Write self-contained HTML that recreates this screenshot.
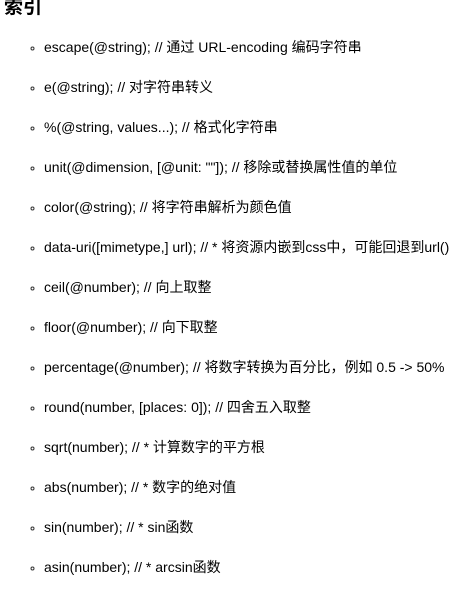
<!DOCTYPE html>
<html><head><meta charset="utf-8"><style>
body{margin:0;background:#fff;width:452px;height:565px;overflow:hidden;font-family:"Liberation Sans","Noto Sans CJK SC",sans-serif;color:#000}
h2{position:absolute;left:4px;top:-4px;margin:0;font-size:19px;font-weight:bold;line-height:24px}
ul{position:absolute;left:0;top:37px;margin:0;padding:0 0 0 44px;list-style:circle;font-size:14px;width:420px}
li{height:40px;line-height:20px;white-space:nowrap}
li::marker{font-size:11px;color:#333}
</style></head><body>
<h2>索引</h2>
<ul>
<li>escape(@string); // 通过 URL-encoding 编码字符串</li>
<li>e(@string); // 对字符串转义</li>
<li>%(@string, values...); // 格式化字符串</li>
<li>unit(@dimension, [@unit: ""]); // 移除或替换属性值的单位</li>
<li>color(@string); // 将字符串解析为颜色值</li>
<li>data-uri([mimetype,] url); // * 将资源内嵌到css中，可能回退到url()</li>
<li>ceil(@number); // 向上取整</li>
<li>floor(@number); // 向下取整</li>
<li>percentage(@number); // 将数字转换为百分比，例如 0.5 -&gt; 50%</li>
<li>round(number, [places: 0]); // 四舍五入取整</li>
<li>sqrt(number); // * 计算数字的平方根</li>
<li>abs(number); // * 数字的绝对值</li>
<li>sin(number); // * sin函数</li>
<li>asin(number); // * arcsin函数</li>
</ul>
</body></html>
